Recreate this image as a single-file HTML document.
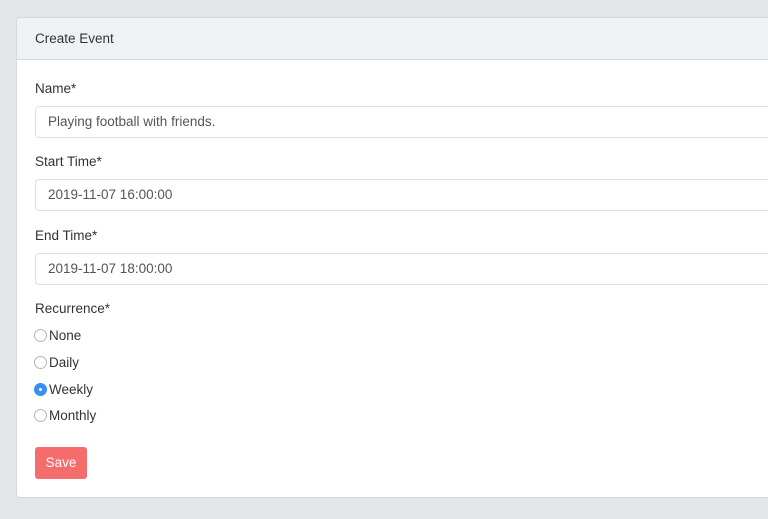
<!DOCTYPE html>
<html><head><style>
body{margin:0;width:768px;height:519px;background:#e4e5e7;font-family:"Liberation Sans",sans-serif;overflow:hidden;position:relative;color:#333}
.card{position:absolute;left:16px;top:17px;width:780px;height:479px;background:#fff;border:1px solid #d6d9dc;border-radius:4px}
.hd{height:41px;background:#eef2f5;border-bottom:1px solid #d6d9dc;border-radius:4px 4px 0 0;font-size:13.5px;line-height:42px;padding-left:18px;color:#333}
.lbl{position:absolute;left:18px;font-size:13.5px;color:#333}
.inp{position:absolute;left:18px;width:760px;height:32px;border:1px solid #dcdfe3;border-radius:4px;box-sizing:border-box;font-size:13.5px;line-height:30px;padding-left:12px;color:#555}
.r{position:absolute;left:17px;font-size:13.5px;color:#333}
.c{display:inline-block;width:13px;height:13px;border:1px solid #b5b5b5;border-radius:50%;vertical-align:-2px;margin-right:2px;box-sizing:border-box;background:#fff}
.c.on{background:#3b8fee;border-color:#3b8fee;position:relative}
.c.on:after{content:"";position:absolute;left:4px;top:4px;width:3px;height:3px;border-radius:50%;background:#fff}
.btn{position:absolute;left:18px;top:429px;width:52px;height:32px;background:#f56c6c;border-radius:3px;color:#fff;font-size:13.5px;line-height:32px;text-align:center}
</style></head><body>
<div class="card">
<div class="hd">Create Event</div>
<div class="lbl" style="top:63px">Name*</div>
<div class="inp" style="top:88px">Playing football with friends.</div>
<div class="lbl" style="top:136px">Start Time*</div>
<div class="inp" style="top:161px">2019-11-07 16:00:00</div>
<div class="lbl" style="top:210px">End Time*</div>
<div class="inp" style="top:235px">2019-11-07 18:00:00</div>
<div class="lbl" style="top:283px">Recurrence*</div>
<div class="r" style="top:310px"><span class="c"></span>None</div>
<div class="r" style="top:337px"><span class="c"></span>Daily</div>
<div class="r" style="top:364px"><span class="c on"></span>Weekly</div>
<div class="r" style="top:390px"><span class="c"></span>Monthly</div>
<div class="btn">Save</div>
</div>
</body></html>
